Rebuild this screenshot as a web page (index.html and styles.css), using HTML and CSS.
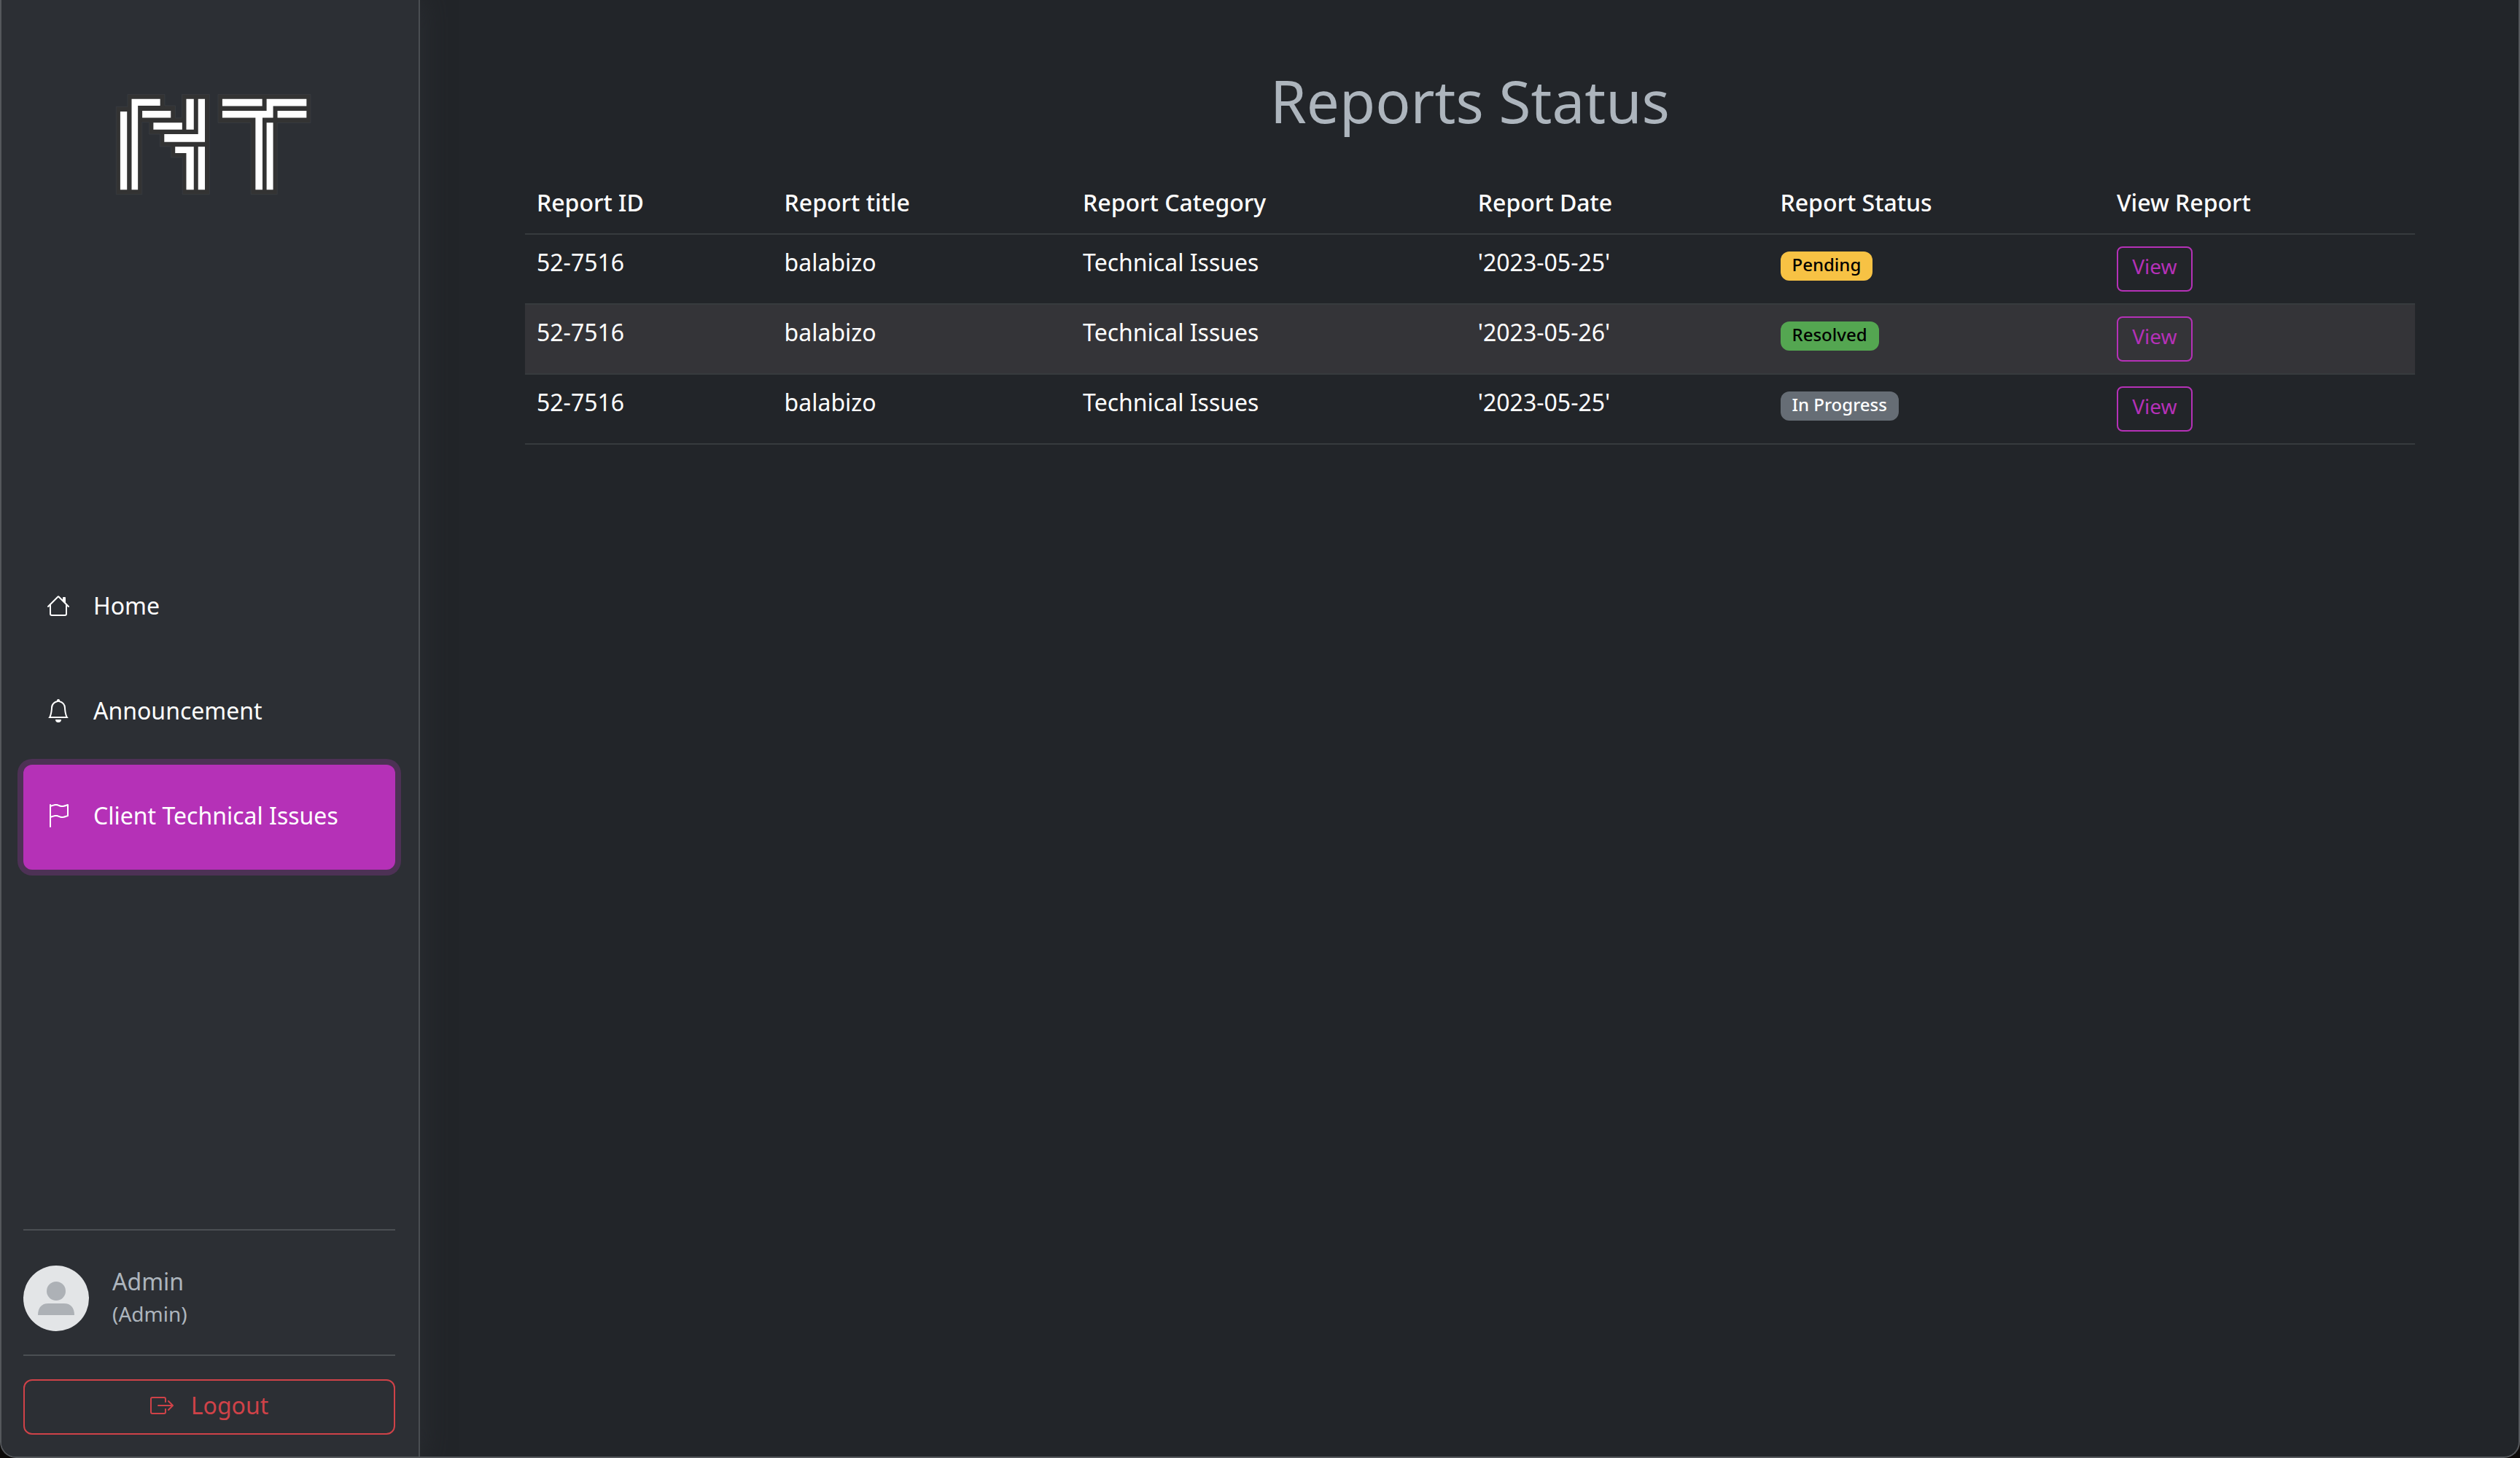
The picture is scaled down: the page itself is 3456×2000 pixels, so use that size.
FILE: index.html
```html
<!DOCTYPE html>
<html lang="en">
<head>
<meta charset="utf-8">
<title>Reports Status</title>
<link rel="stylesheet" href="styles.css">
</head>
<body>
<div class="app">
  <aside class="sidebar">
    <svg class="logo" viewBox="51 87 840 416" role="img" aria-label="NT">
      <g class="logo-edge">
        <polygon points="86,139 133,139 133,88 287,88 287,135 331,135 331,186 358,186 358,88 472,88 472,502 360,502 360,349 313,349 313,304 267,304 267,253 222,253 222,204 193,204 193,502 86,502"/>
        <polygon points="507,88 890,88 890,206 752,206 752,502 643,502 643,206 507,206"/>
      </g>
      <g class="logo-bars">
        <path d="M103 159h28v324h-28z M150 107h118v28h-92v348h-26z M194 156h118v29H194z M240 205h119v29H240z M376 107h31v127h-31z M425 107h28v178H285v-32h140z M330 305h77v178h-31V331h-46z M425 305h28v178h-28z"/>
        <path d="M525 107h165v30H525z M708 107h165v30H735v48h-44v298h-29V185H525v-29h183z M753 156h120v29H753z M708 205h27v278h-27z"/>
      </g>
    </svg>
    <nav class="menu">
      <a class="menu-item" href="#home">
        <svg class="icon" viewBox="0 0 16 16" aria-hidden="true"><path d="M8.707 1.5a1 1 0 0 0-1.414 0L.646 8.146a.5.5 0 0 0 .708.708L2 8.207V13.5A1.5 1.5 0 0 0 3.5 15h9a1.5 1.5 0 0 0 1.5-1.5V8.207l.646.647a.5.5 0 0 0 .708-.708L13 5.793V2.5a.5.5 0 0 0-.5-.5h-1a.5.5 0 0 0-.5.5v1.293L8.707 1.5ZM13 7.207V13.5a.5.5 0 0 1-.5.5h-9a.5.5 0 0 1-.5-.5V7.207l5-5 5 5Z"/></svg>
        <span>Home</span>
      </a>
      <a class="menu-item" href="#announcement">
        <svg class="icon" viewBox="0 0 16 16" aria-hidden="true"><path d="M8 16a2 2 0 0 0 2-2H6a2 2 0 0 0 2 2zM8 1.918l-.797.161A4.002 4.002 0 0 0 4 6c0 .628-.134 2.197-.459 3.742-.16.767-.376 1.566-.663 2.258h10.244c-.287-.692-.502-1.49-.663-2.258C12.134 8.197 12 6.628 12 6a4.002 4.002 0 0 0-3.203-3.92L8 1.917zM14.22 12c.223.447.481.801.78 1H1c.299-.199.557-.553.78-1C2.68 10.2 3 6.88 3 6c0-2.42 1.72-4.44 4.005-4.901a1 1 0 1 1 1.99 0A5.002 5.002 0 0 1 13 6c0 .88.32 4.2 1.22 6z"/></svg>
        <span>Announcement</span>
      </a>
      <a class="menu-item menu-item-active" href="#issues" aria-current="page">
        <svg class="icon" viewBox="0 0 16 16" aria-hidden="true"><path d="M14.778.085A.5.5 0 0 1 15 .5V8a.5.5 0 0 1-.314.464L14.5 8l.186.464-.003.001-.006.003-.023.009a12.435 12.435 0 0 1-.397.15c-.264.095-.631.223-1.047.35-.816.252-1.879.523-2.71.523-.847 0-1.548-.28-2.158-.525l-.028-.01C7.68 8.71 7.14 8.5 6.5 8.5c-.7 0-1.638.23-2.437.477A19.626 19.626 0 0 0 3 9.342V15.5a.5.5 0 0 1-1 0V.5a.5.5 0 0 1 1 0v.282c.226-.079.496-.17.79-.26C4.606.272 5.67 0 6.5 0c.84 0 1.524.277 2.121.519l.043.018C9.286.788 9.828 1 10.5 1c.7 0 1.638-.23 2.437-.477a19.587 19.587 0 0 0 1.349-.476l.019-.007.004-.002h.001M14 1.221c-.22.078-.48.167-.766.255-.81.252-1.872.523-2.734.523-.886 0-1.592-.286-2.203-.534l-.008-.003C7.662 1.21 7.139 1 6.5 1c-.669 0-1.606.229-2.415.478A21.294 21.294 0 0 0 3 1.845v6.433c.22-.078.48-.167.766-.255C4.576 7.77 5.638 7.5 6.5 7.5c.847 0 1.548.28 2.158.525l.028.01C9.32 8.29 9.86 8.5 10.5 8.5c.668 0 1.606-.229 2.415-.478A21.317 21.317 0 0 0 14 7.655V1.222z"/></svg>
        <span>Client Technical Issues</span>
      </a>
    </nav>
    <div class="account">
      <div class="user">
        <svg class="avatar" viewBox="0 0 90 90" aria-hidden="true">
          <circle class="avatar-disc" cx="45" cy="45" r="45"/>
          <circle class="avatar-figure" cx="45" cy="35" r="13"/>
          <path class="avatar-figure" d="M20 68c0-10 5-16 14-16h22c9 0 14 6 14 16z"/>
        </svg>
        <div class="user-text">
          <div class="user-name">Admin</div>
          <div class="user-role">(Admin)</div>
        </div>
      </div>
      <button class="logout" type="button">
        <svg class="icon" viewBox="0 0 16 16" aria-hidden="true"><path fill-rule="evenodd" d="M10 12.5a.5.5 0 0 1-.5.5h-8a.5.5 0 0 1-.5-.5v-9a.5.5 0 0 1 .5-.5h8a.5.5 0 0 1 .5.5v2a.5.5 0 0 0 1 0v-2A1.5 1.5 0 0 0 9.5 2h-8A1.5 1.5 0 0 0 0 3.5v9A1.5 1.5 0 0 0 1.5 14h8a1.5 1.5 0 0 0 1.5-1.5v-2a.5.5 0 0 0-1 0v2z"/><path fill-rule="evenodd" d="M15.854 8.354a.5.5 0 0 0 0-.708l-3-3a.5.5 0 0 0-.708.708L14.293 7.5H5.5a.5.5 0 0 0 0 1h8.793l-2.147 2.146a.5.5 0 0 0 .708.708l3-3z"/></svg>
        <span>Logout</span>
      </button>
    </div>
  </aside>
  <main class="content">
    <h1 class="title">Reports Status</h1>
    <table class="reports">
      <colgroup>
        <col class="col-id"><col class="col-title"><col class="col-category"><col class="col-date"><col class="col-status"><col class="col-view">
      </colgroup>
      <thead>
        <tr><th scope="col">Report ID</th><th scope="col">Report title</th><th scope="col">Report Category</th><th scope="col">Report Date</th><th scope="col">Report Status</th><th scope="col">View Report</th></tr>
      </thead>
      <tbody>
        <tr><td>52-7516</td><td>balabizo</td><td>Technical Issues</td><td>'2023-05-25'</td><td class="status"><span class="badge badge-pending">Pending</span></td><td><button class="view" type="button">View</button></td></tr>
        <tr><td>52-7516</td><td>balabizo</td><td>Technical Issues</td><td>'2023-05-26'</td><td class="status"><span class="badge badge-resolved">Resolved</span></td><td><button class="view" type="button">View</button></td></tr>
        <tr><td>52-7516</td><td>balabizo</td><td>Technical Issues</td><td>'2023-05-25'</td><td class="status"><span class="badge badge-progress">In Progress</span></td><td><button class="view" type="button">View</button></td></tr>
      </tbody>
    </table>
  </main>
</div>
</body>
</html>
```
FILE: styles.css
```css
* { box-sizing: border-box; }

body {
  margin: 0;
  background: #0c0a09;
  color: #fff;
  font: 400 32px/44px "Noto Sans", "Open Sans", sans-serif;
}

.app {
  display: flex;
  min-height: 100vh;
  border: 2px solid #55585c;
  border-top: 0;
  border-radius: 0 0 22px 22px;
  background: #222529;
  overflow: hidden;
}

.sidebar {
  display: flex;
  flex: 0 0 574px;
  flex-direction: column;
  justify-content: space-between;
  padding: 129px 32px 30px 30px;
  border-right: 2px solid #4a4e52;
  background: #2c2f34;
  box-shadow: 0 0 36px #2c2f34;
}

.logo { display: block; align-self: center; width: 280px; height: 138px; }
.logo-edge { fill: #333; stroke: #3b4046; stroke-width: 2; }
.logo-bars { fill: #fff; }

.icon { flex: none; width: 32px; height: 32px; fill: currentColor; }

.menu { display: flex; flex-direction: column; }
.menu-item {
  display: flex;
  align-items: center;
  gap: 32px;
  padding: 48px 32px 52px;
  border-radius: 12px;
  color: #fff;
  text-decoration: none;
}
.menu-item-active { background: #b531b7; box-shadow: 0 0 0 8px #4d3155; }

.user {
  display: flex;
  gap: 32px;
  padding: 48px 0 32px;
  border-top: 2px solid #4b4f53;
  border-bottom: 2px solid #4b4f53;
  color: #adb5bd;
}
.avatar { width: 90px; height: 90px; }
.avatar-disc { fill: #e3e5e7; }
.avatar-figure { fill: #adb1b6; }
.user-role { font-size: 28px; }

.logout {
  display: flex;
  align-items: center;
  justify-content: center;
  gap: 24px;
  width: 100%;
  margin-top: 32px;
  padding: 12px 24px 16px;
  border: 2px solid #cf4248;
  border-radius: 12px;
  background: transparent;
  color: #cf4248;
  font: inherit;
}

.content { flex: 1; min-width: 0; padding: 90px 142px 48px 144px; }

.title {
  margin: 0 0 54px;
  color: #adb5bd;
  font-size: 80px;
  font-weight: 400;
  line-height: 96px;
  text-align: center;
}

.reports { width: 100%; border-collapse: separate; border-spacing: 0; table-layout: fixed; }
.col-id { width: 13.1%; }
.col-title { width: 15.8%; }
.col-category { width: 20.9%; }
.col-date { width: 16%; }
.col-status { width: 17.8%; }
.col-view { width: 16.4%; }

.reports th,
.reports td {
  padding: 16px;
  border-bottom: 2px solid #373b3e;
  text-align: left;
  vertical-align: top;
}
.reports th { padding-bottom: 20px; font-weight: 500; }
.reports tbody tr:nth-child(even) { background: #343438; }
.reports .status { padding-top: 23px; padding-bottom: 0; }

.badge {
  display: block;
  width: fit-content;
  padding: 6px 16px 10px;
  border-radius: 12px;
  font-size: 24px;
  font-weight: 500;
  line-height: 24px;
}
.badge-pending { background: #f7c244; color: #000; }
.badge-resolved { background: #54a651; color: #000; }
.badge-progress { background: #666d75; color: #fff; }

.view {
  display: block;
  min-width: 104px;
  padding: 6px 16px 14px;
  border: 2px solid #b531b7;
  border-radius: 8px;
  background: transparent;
  color: #b531b7;
  font: inherit;
  font-size: 28px;
  line-height: 38px;
}
```
